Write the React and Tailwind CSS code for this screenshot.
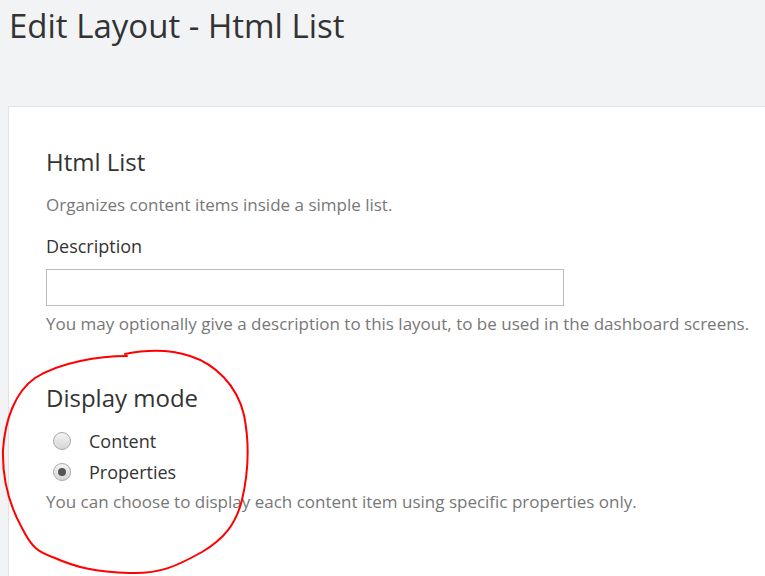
import React from "react";

const font = { fontFamily: "'Open Sans', 'Noto Sans', sans-serif" };

function Radio({ checked }) {
    return (
        <span className="flex h-[18px] w-[18px] items-center justify-center rounded-full border border-[#a9a9a9] bg-gradient-to-b from-[#f4f4f4] to-[#d6d6d6]">
            {checked ? <span className="h-[8px] w-[8px] rounded-full bg-[#555]" /> : null}
        </span>
    );
}

function Annotation() {
    // hand drawn red loop around the display mode block
    return (
        <svg
            className="pointer-events-none absolute left-0 top-0"
            width="765"
            height="576"
            viewBox="0 0 765 576">
            <path
                d="M127 356 C 100 356, 60 362, 35 378 C 15 392, 5 420, 3 450 C 2 485, 12 510, 22 528 C 32 548, 38 552, 55 558 C 75 567, 95 572, 130 573 C 160 574, 177 566, 202 552 C 224 539, 236 524, 242 500 C 249 470, 249 440, 244 415 C 237 385, 215 364, 190 356 C 172 350, 150 349, 125 354"
                fill="none"
                stroke="#ff0000"
                strokeWidth="2"
                strokeLinecap="round"
            />
        </svg>
    );
}

export default function App() {
    return (
        <div className="relative h-[576px] w-[765px] overflow-hidden bg-[#f2f3f5]" style={font}>
            <h1 className="pl-[9px] pt-[2px] text-[33px] leading-[48px] text-[#333]">
                Edit Layout - Html List
            </h1>
            <div className="ml-[8px] mt-[56px] w-[800px] border border-[#e2e2e2] bg-white pl-[37px] pt-[38px] pb-[120px]">
                <h3 className="text-[24px] leading-[34px] text-[#333]">Html List</h3>
                <p className="mt-[14px] text-[17px] leading-[24px] text-[#777]">
                    Organizes content items inside a simple list.
                </p>
                <label className="mt-[16px] block text-[18px] leading-[26px] text-[#333]">
                    Description
                </label>
                <input
                    type="text"
                    className="mt-[10px] block h-[37px] w-[518px] border border-[#bcbcbc] bg-white px-2 outline-none"
                />
                <p className="mt-[6px] text-[17px] leading-[24px] text-[#777]">
                    You may optionally give a description to this layout, to be used in the dashboard screens.
                </p>
                <h3 className="mt-[45px] text-[24px] leading-[34px] text-[#333]">Display mode</h3>
                <div className="mt-[10px] flex flex-col pl-[7px]">
                    <div className="flex h-[31px] items-center gap-[18px]">
                        <Radio />
                        <span className="text-[18px] leading-[22px] text-[#333]">Content</span>
                    </div>
                    <div className="flex h-[31px] items-center gap-[18px]">
                        <Radio checked />
                        <span className="text-[18px] leading-[22px] text-[#333]">Properties</span>
                    </div>
                </div>
                <p className="mt-[3px] text-[17px] leading-[24px] text-[#777]">
                    You can choose to display each content item using specific properties only.
                </p>
            </div>
            <Annotation />
        </div>
    );
}
